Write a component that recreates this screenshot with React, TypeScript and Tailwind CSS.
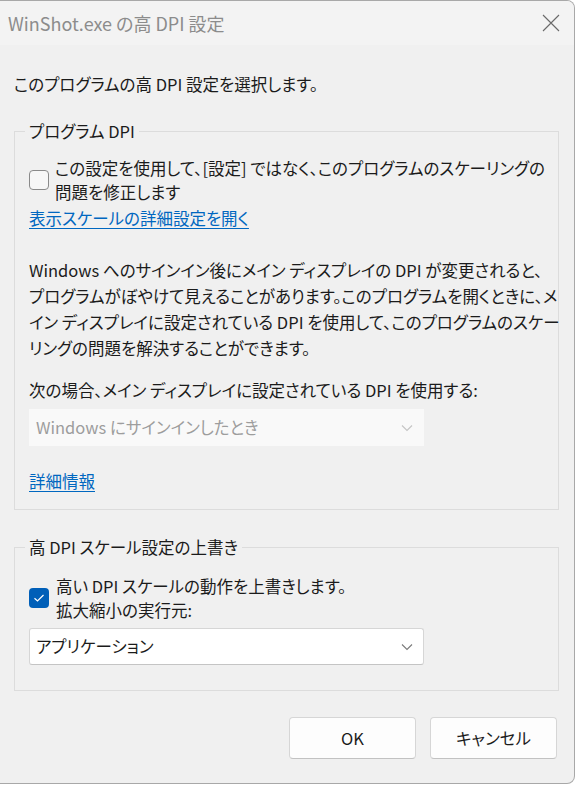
import React from 'react';

const font = "[font-family:'Noto_Sans_CJK_JP','Noto_Sans',sans-serif] [font-feature-settings:'palt']";

function Chevron({ color }: { color: string }) {
  return (
    <svg width="12" height="8" viewBox="0 0 12 8" fill="none">
      <path d="M1 1.5 L6 6.5 L11 1.5" stroke={color} strokeWidth="1.1" />
    </svg>
  );
}

function CheckBox({ checked = false }: { checked?: boolean }) {
  if (checked) {
    return (
      <div className="w-[20px] h-[20px] shrink-0 rounded-[4px] bg-[#005fb8] flex items-center justify-center">
        <svg width="12" height="10" viewBox="0 0 12 10" fill="none">
          <path d="M1.5 5.2 L4.5 8 L10.5 2" stroke="#ffffff" strokeWidth="1.2" />
        </svg>
      </div>
    );
  }
  return <div className="w-[20px] h-[20px] shrink-0 rounded-[4px] border border-[#8a8a8a] bg-[#f7f7f7]" />;
}

export default function App() {
  return (
    <div className={`w-[576px] h-[785px] bg-white ${font} text-[16.5px] text-[#1b1b1b]`}>
      <div className="w-[575px] h-[784px] bg-[#f0f0f0] border-t border-r border-b border-[#a8a8a8] rounded-tr-[8px] rounded-br-[8px] flex flex-col overflow-hidden">
        {/* title bar */}
        <div className="h-[44px] shrink-0 bg-[#f3f3f3] flex items-center justify-between pl-[8px] pr-[14px]">
          <span className="text-[18px] text-[#8c8c8c] leading-none">WinShot.exe の高 DPI 設定</span>
          <svg width="18" height="18" viewBox="0 0 18 18" fill="none">
            <path d="M1 1 L17 17 M17 1 L1 17" stroke="#6a6a6a" strokeWidth="1.1" />
          </svg>
        </div>

        <div className="pl-[14px] mt-[27px] leading-[24px]">このプログラムの高 DPI 設定を選択します。</div>

        {/* group 1 */}
        <fieldset className="ml-[14px] w-[545px] [min-inline-size:0] mt-[23px] border border-[#dcdcdc] pl-[14px] pb-[16px]">
          <legend className="ml-[-4px] px-[4px] leading-[24px]">プログラム DPI</legend>
          <div className="flex items-center gap-[6px] mt-[13px] leading-[24px] whitespace-nowrap">
            <CheckBox />
            <div>
              この設定を使用して、[設定] ではなく、このプログラムのスケーリングの
              <br />
              問題を修正します
            </div>
          </div>
          <div className="mt-[2px] leading-[24px]">
            <span className="text-[#0067c0] underline underline-offset-[3px] decoration-[1px]">表示スケールの詳細設定を開く</span>
          </div>
          <div className="mt-[27px] leading-[26px] whitespace-nowrap">
            Windows へのサインイン後にメイン ディスプレイの DPI が変更されると、
            <br />
            プログラムがぼやけて見えることがあります。このプログラムを開くときに、メ
            <br />
            イン ディスプレイに設定されている DPI を使用して、このプログラムのスケー
            <br />
            リングの問題を解決することができます。
          </div>
          <div className="mt-[17px] leading-[24px]">次の場合、メイン ディスプレイに設定されている DPI を使用する:</div>
          <div className="mt-[7px] w-[395px] h-[37px] bg-[#f9f9f9] flex items-center justify-between pl-[7px] pr-[11px] text-[#9d9d9d]">
            <span>Windows にサインインしたとき</span>
            <Chevron color="#c4c4c4" />
          </div>
          <div className="mt-[23px] leading-[24px]">
            <span className="text-[#0067c0] underline underline-offset-[3px] decoration-[1px]">詳細情報</span>
          </div>
        </fieldset>

        {/* group 2 */}
        <fieldset className="ml-[14px] w-[545px] [min-inline-size:0] mt-[25px] border border-[#dcdcdc] pl-[14px] pb-[25px]">
          <legend className="ml-[-4px] px-[4px] leading-[24px]">高 DPI スケール設定の上書き</legend>
          <div className="flex items-center gap-[7px] mt-[15px] leading-[24px]">
            <CheckBox checked />
            <div>
              高い DPI スケールの動作を上書きします。
              <br />
              拡大縮小の実行元:
            </div>
          </div>
          <div className="mt-[6px] w-[395px] h-[37px] bg-white border border-[#d6d6d6] border-b-[#c4c4c4] rounded-[3px] flex items-center justify-between pl-[6px] pr-[10px]">
            <span>アプリケーション</span>
            <Chevron color="#7a7a7a" />
          </div>
        </fieldset>

        {/* buttons */}
        <div className="mt-[26px] flex justify-end gap-[14px] pr-[17px]">
          <button className="w-[127px] h-[42px] bg-[#fdfdfd] border border-[#d6d6d6] border-b-[#c2c2c2] rounded-[4px] text-[16.5px]">OK</button>
          <button className="w-[127px] h-[42px] bg-[#fdfdfd] border border-[#d6d6d6] border-b-[#c2c2c2] rounded-[4px] text-[16.5px]">キャンセル</button>
        </div>
      </div>
    </div>
  );
}
